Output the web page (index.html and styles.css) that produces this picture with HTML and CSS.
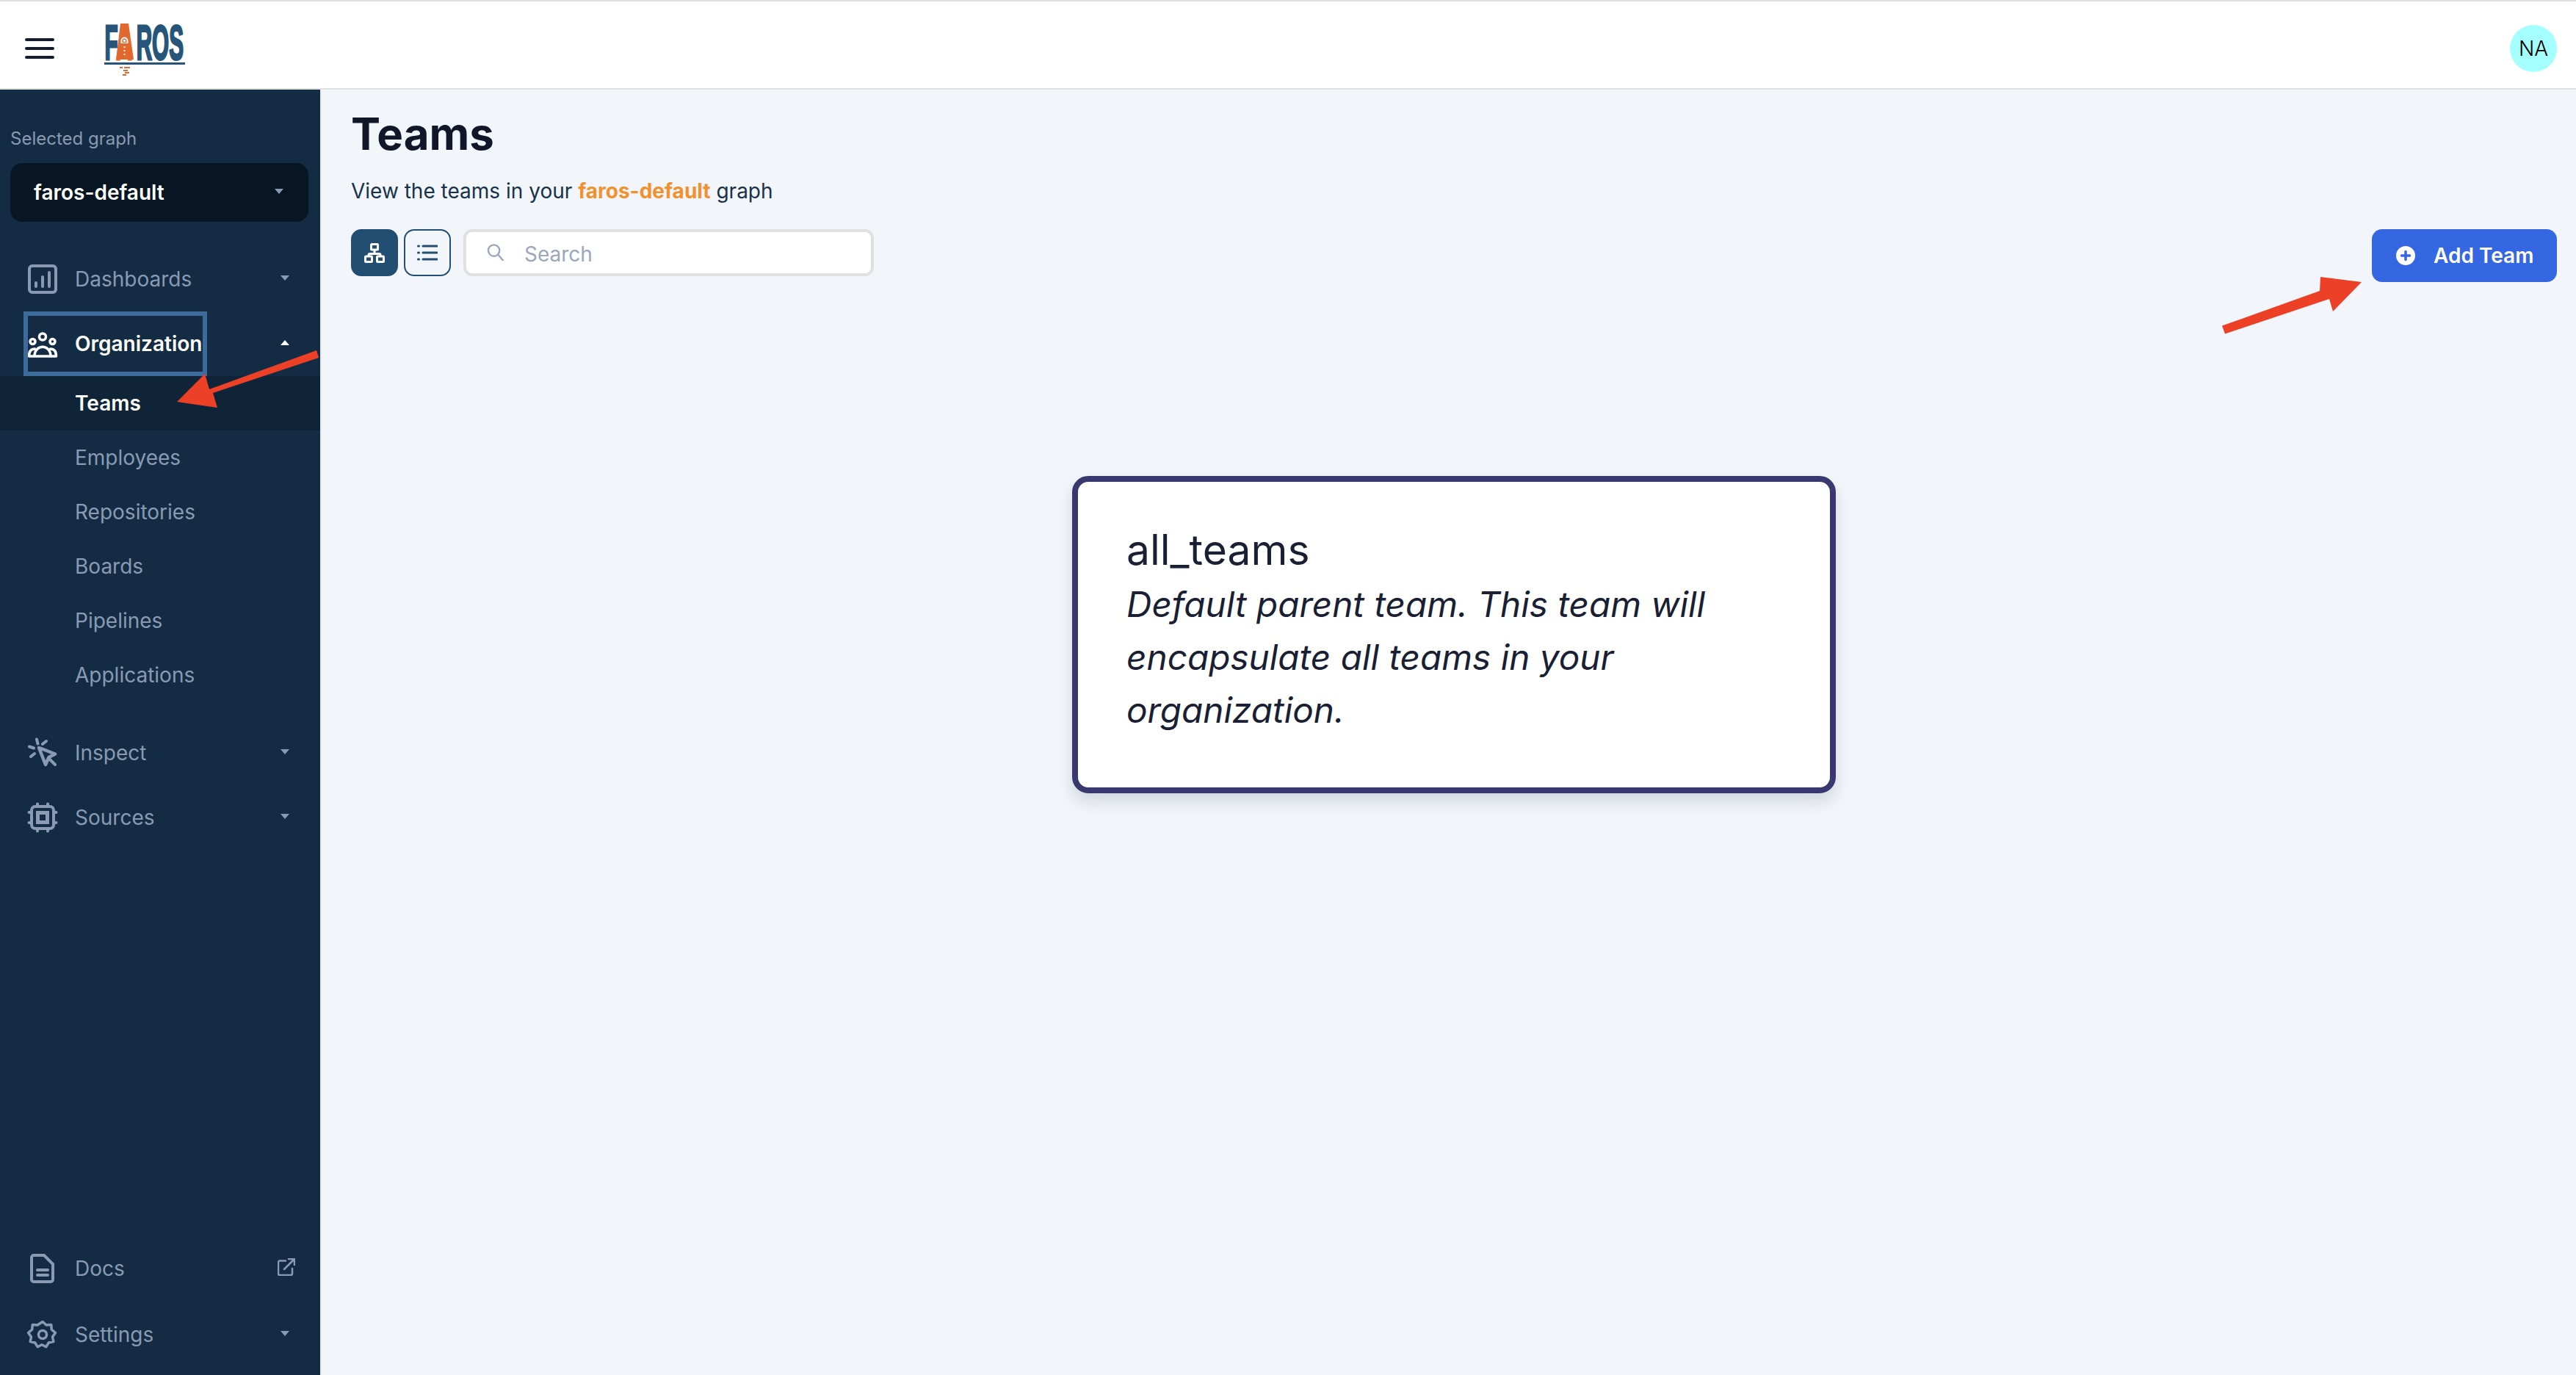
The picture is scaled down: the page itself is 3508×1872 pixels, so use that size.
FILE: index.html
```html
<!DOCTYPE html>
<html lang="en">
<head>
<meta charset="utf-8">
<title>Teams</title>
<link rel="stylesheet" href="styles.css">
</head>
<body>
<div class="app">
  <header class="topbar">
    <button class="burger" aria-label="Menu"><span></span><span></span><span></span></button>
    <svg class="logo" viewBox="0 -14 110 86" width="110" height="86">
      <text class="logo-t" transform="scale(.45 1)" y="49"><tspan x="1">F</tspan><tspan class="logo-a" x="36">A</tspan><tspan x="97">ROS</tspan></text>
      <polygon class="logo-o" points="22,0 33,0 40,49 16,49"/>
      <path class="logo-w" d="M22.500 27v-3.500a5 5 0 0 1 10 0V27zM24.500 26h6v-2.500a3 3 0 0 0-6 0z"/>
      <rect class="logo-w" x="26" y="22" width="3" height="3"/>
      <rect class="logo-w" x="26.500" y="31" width="2" height="2"/><rect class="logo-w" x="26.500" y="36" width="2" height="2"/><rect class="logo-w" x="26.500" y="41" width="2" height="2"/>
      <rect class="logo-b" x="0" y="53" width="110" height="3"/>
      <rect class="logo-o" x="21" y="59" width="4" height="2"/><rect class="logo-o" x="27" y="59" width="8" height="2"/>
      <rect class="logo-o" x="26" y="63" width="6" height="2"/><rect class="logo-o" x="28" y="66" width="6" height="2"/><rect class="logo-o" x="25" y="69" width="5" height="2"/>
    </svg>
    <div class="avatar">NA</div>
  </header>
  <div class="body">
    <aside class="sidebar">
      <div class="graph-label">Selected graph</div>
      <div class="graph-select"><span>faros-default</span><i class="caret"></i></div>
      <nav class="nav">
        <a class="row">
          <svg class="ico" viewBox="0 0 40 40"><rect class="s4" x="2" y="2" width="36" height="36" rx="4"/><path class="s3b" d="M11 30v-5M20 30V17M29 30V11"/></svg>
          <span class="row-t">Dashboards</span><i class="caret"></i>
        </a>
        <a class="row active">
          <span class="focus-box"></span>
          <svg class="ico" viewBox="0 0 40 40"><g class="s2w"><circle cx="20" cy="10.500" r="4.500"/><circle cx="6.500" cy="17" r="3.500"/><circle cx="33.500" cy="17" r="3.500"/><path d="M9 37c0-17 22-17 22 0M1.500 37c0-6 2.500-10 8-10M38.500 37c0-6-2.500-10-8-10M1.500 37h37"/></g></svg>
          <span class="row-t">Organization</span><i class="caret up"></i>
        </a>
        <a class="sub current">Teams</a>
        <a class="sub">Employees</a>
        <a class="sub">Repositories</a>
        <a class="sub">Boards</a>
        <a class="sub">Pipelines</a>
        <a class="sub">Applications</a>
        <a class="row gap">
          <svg class="ico" viewBox="0 0 40 40"><path class="fillg" d="M15 13l22 8.500-8.500 4.500L24 36z"/><path class="s3b" d="M12 1.500l1.500 6M2 11.500l6 2M4 25l5-4M25 4l-5 4M28 27l9 9"/></svg>
          <span class="row-t">Inspect</span><i class="caret"></i>
        </a>
        <a class="row">
          <svg class="ico" viewBox="0 0 40 40"><rect class="s4" x="5" y="5" width="30" height="30" rx="5"/><rect class="s5" x="13.500" y="13.500" width="13" height="13"/><path class="s3b" d="M13 1.500v3M27 1.500v3M13 35.500v3M27 35.500v3M1.500 13h3M1.500 27h3M35.500 13h3M35.500 27h3"/></svg>
          <span class="row-t">Sources</span><i class="caret"></i>
        </a>
      </nav>
      <div class="nav-bottom">
        <a class="row">
          <svg class="ico" viewBox="0 0 40 40"><path class="s4" d="M8 2h14l12 12v21a3 3 0 0 1-3 3H8a3 3 0 0 1-3-3V5a3 3 0 0 1 3-3z"/><path class="s3b" d="M13 22h14M13 29h14"/></svg>
          <span class="row-t">Docs</span>
          <svg class="ext" viewBox="0 0 24 24"><path class="s2g" d="M11 3.500H3a2 2 0 0 0-2 2V21a2 2 0 0 0 2 2h15a2 2 0 0 0 2-2v-7M9 15L23 1M15 1h8v8"/></svg>
        </a>
        <a class="row">
          <svg class="ico" viewBox="0 0 40 40"><path class="s35" d="M20 2.500l5 4.500 6.700-.5.600 6.600 5.200 4.400-4 5.500 1.300 6.500-6.500 1.500-3.500 5.700-5.800-3-5.800 3-3.500-5.700-6.500-1.500 1.300-6.500-4-5.500 5.200-4.400.6-6.600 6.700.5z"/><circle class="s35" cx="20" cy="20" r="5.500"/></svg>
          <span class="row-t">Settings</span><i class="caret"></i>
        </a>
      </div>
    </aside>
    <main class="main">
      <h1 class="title">Teams</h1>
      <p class="subtitle">View the teams in your <b>faros-default</b> graph</p>
      <div class="toolbar">
        <button class="view on" aria-label="Tree view">
          <svg viewBox="0 0 28 27" width="28" height="27"><g class="treeline"><rect x="9.500" y="1.500" width="9" height="7.500" rx="1"/><path d="M14 9v5.500M6 18v-2a1.500 1.500 0 0 1 1.500-1.500h13a1.500 1.500 0 0 1 1.500 1.500v2"/><rect x="1.500" y="18" width="9" height="7.500" rx="1"/><rect x="17.500" y="18" width="9" height="7.500" rx="1"/></g></svg>
        </button>
        <button class="view" aria-label="List view">
          <svg viewBox="0 0 28 22" width="28" height="22"><path class="listline" d="M8 2h19M8 11h19M8 20h19"/><path class="listline" d="M1.500 2h1M1.500 11h1M1.500 20h1"/></svg>
        </button>
        <div class="search">
          <svg class="search-ico" viewBox="0 0 24 24"><circle cx="10" cy="10" r="8"/><path d="M16 16l7 8"/></svg>
          <span>Search</span>
        </div>
        <button class="add">
          <svg viewBox="0 0 26 26" width="26" height="26"><circle cx="13" cy="13" r="13" fill="#fff"/><path class="plus" d="M13 7.500v11M7.500 13h11"/></svg>
          <span>Add Team</span>
        </button>
      </div>
      <article class="node">
        <h2>all_teams</h2>
        <p>Default parent team. This team will encapsulate all teams in your organization.</p>
      </article>
    </main>
  </div>
</div>
<svg class="annot" viewBox="0 0 3508 1872" width="3508" height="1872" aria-hidden="true">
  <polygon points="3026,443.500 3159,396 3160,377 3216,384 3177,424 3172,407 3030,454.500"/>
  <polygon points="431,477 285,530 279,509 241,547 296,555 290,535 434,487"/>
</svg>
</body>
</html>
```
FILE: styles.css
```css
* { box-sizing: border-box; }
html, body { margin: 0; padding: 0; }
body {
  width: 3508px;
  height: 1872px;
  overflow: hidden;
  position: relative;
  font-family: Inter, "Liberation Sans", sans-serif;
  background: #f2f5fa;
  color: #1a2033;
}
button { font: inherit; border: 0; padding: 0; background: none; }
.app { display: flex; flex-direction: column; height: 100%; }

.topbar {
  height: 122px;
  flex: none;
  display: flex;
  align-items: center;
  background: #fff;
  border-top: 2px solid #dfdfdf;
  border-bottom: 2px solid #e0e0e0;
  padding: 10px 26px 0 34px;
}
.burger { width: 40px; display: flex; flex-direction: column; gap: 8px; }
.burger span { display: block; height: 4px; border-radius: 2px; background: #151c2e; }
.logo { margin-left: 68px; margin-top: -10px; overflow: visible; }
.logo-t { font: 700 66px "Liberation Sans", sans-serif; fill: #265579; stroke: #265579; stroke-width: 3; }
.logo-a { fill: #e2682e; stroke: #e2682e; }
.logo-b { fill: #265579; }
.logo-o { fill: #e2682e; }
.logo-w { fill: #fff; }
.avatar {
  margin-left: auto;
  width: 64px;
  height: 64px;
  border-radius: 50%;
  background: #a5ffff;
  color: #000;
  font-size: 28px;
  font-weight: 300;
  display: flex;
  align-items: center;
  justify-content: center;
}

.body { flex: 1; display: flex; min-height: 0; }
.sidebar {
  width: 438px;
  flex: none;
  display: flex;
  flex-direction: column;
  background: #132c44;
  border-right: 2px solid #e6e9ef;
  padding: 52px 0 11px;
}
.graph-label { font-size: 24px; line-height: 30px; color: #8a9ab3; padding-left: 14px; }
.graph-select {
  margin: 18px 16px 34px 14px;
  height: 80px;
  flex: none;
  border-radius: 16px;
  background: #071622;
  color: #fff;
  font-size: 28px;
  font-weight: 600;
  display: flex;
  align-items: center;
  justify-content: space-between;
  padding: 0 34px 0 32px;
}
.caret {
  width: 0;
  height: 0;
  border-left: 6px solid transparent;
  border-right: 6px solid transparent;
  border-top: 7px solid #8a9ab3;
  margin-top: -4px;
}
.caret.up { border-top: 0; border-bottom: 7px solid #fff; }
.nav { display: flex; flex-direction: column; }
.nav-bottom { margin-top: auto; display: flex; flex-direction: column; gap: 2px; }
.row {
  position: relative;
  height: 88px;
  flex: none;
  display: flex;
  align-items: center;
  gap: 24px;
  padding: 0 42px 0 38px;
  color: #8a9ab3;
  font-size: 28px;
}
.row.gap { margin-top: 25px; }
.row-t { flex: 1; }
.row.active { color: #fff; font-weight: 600; }
.focus-box {
  position: absolute;
  left: 32px;
  top: 0;
  width: 250px;
  height: 88px;
  border: 6px solid #3d6b9c;
}
.ico { width: 40px; height: 40px; flex: none; overflow: visible; }
.s4 { fill: none; stroke: #8a9ab3; stroke-width: 4; }
.s5 { fill: none; stroke: #8a9ab3; stroke-width: 5; }
.s35 { fill: none; stroke: #8a9ab3; stroke-width: 3.500; stroke-linejoin: round; }
.s3b { fill: none; stroke: #8a9ab3; stroke-width: 4; stroke-linecap: round; }
.fillg { fill: none; stroke: #8a9ab3; stroke-width: 4.500; stroke-linejoin: round; }
.s2w { fill: none; stroke: #fff; stroke-width: 3.500; stroke-linejoin: round; stroke-linecap: round; }
.s2g { fill: none; stroke: #8a9ab3; stroke-width: 2.500; stroke-linecap: round; stroke-linejoin: round; }
.ext { width: 24px; height: 24px; flex: none; margin-right: -8px; margin-top: -4px; }
.sub {
  height: 74px;
  flex: none;
  display: flex;
  align-items: center;
  padding-left: 102px;
  width: 436px;
  font-size: 28px;
  color: #8a9ab3;
}
.sub.current { background: #0f2437; color: #fff; font-weight: 600; }

.main { flex: 1; position: relative; padding: 24px 26px 0 40px; min-width: 0; }
.title { margin: 0; font-size: 60px; line-height: 72px; font-weight: 700; color: #111729; }
.subtitle { margin: 22px 0 0; font-size: 28px; line-height: 40px; color: #17324b; }
.subtitle b { font-weight: 700; color: #f0912f; }
.toolbar { margin-top: 32px; display: flex; align-items: flex-start; gap: 8px; }
.view {
  width: 64px;
  height: 64px;
  border: 2px solid #224e72;
  border-radius: 14px;
  display: flex;
  align-items: center;
  justify-content: center;
}
.view.on { background: #224e72; }
.treeline { fill: none; stroke: #fff; stroke-width: 3; }
.listline { fill: none; stroke: #224e72; stroke-width: 3; stroke-linecap: round; }
.search {
  margin-left: 9px;
  width: 559px;
  height: 64px;
  background: #fff;
  border: 4px solid #e0e0e0;
  border-radius: 12px;
  display: flex;
  align-items: center;
  gap: 28px;
  padding: 3px 0 0 28px;
  font-size: 28px;
  color: #9aa7bd;
}
.search-ico { width: 23px; height: 24px; fill: none; stroke: #9aa7bd; stroke-width: 2.500; stroke-linecap: round; margin-top: -5px; }
.add {
  margin-left: auto;
  width: 252px;
  height: 72px;
  border-radius: 14px;
  background: #3567e3;
  color: #fff;
  font-size: 28px;
  font-weight: 600;
  display: flex;
  align-items: center;
  gap: 25px;
  padding-left: 33px;
}
.plus { fill: none; stroke: #3567e3; stroke-width: 3.500; stroke-linecap: round; }

.node {
  position: absolute;
  left: 1022px;
  top: 526px;
  width: 1040px;
  height: 432px;
  background: #fff;
  border: 8px solid #39386f;
  border-radius: 22px;
  box-shadow: 0 12px 20px rgba(30, 50, 80, .14);
  padding: 62px 66px 0;
}
.node h2 { margin: 0; font-size: 57px; line-height: 62px; font-weight: 400; color: #1a2033; }
.node p { margin: 7px 0 0; font-size: 47.700px; line-height: 72px; font-style: italic; color: #1a2033; }

.annot { position: absolute; left: 0; top: 0; pointer-events: none; }
.annot polygon { fill: #ec4126; }
```
